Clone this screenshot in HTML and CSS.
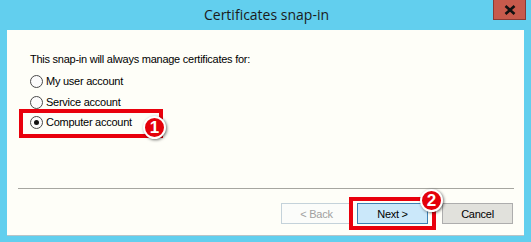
FILE: index.html
```html
<!DOCTYPE html>
<html>
<head>
<meta charset="utf-8">
<link rel="stylesheet" href="styles.css">
</head>
<body>
<div class="window">
  <div class="titlebar">
    <div class="title">Certificates snap-in</div>
    <div class="close"><svg width="12" height="10" viewBox="0 0 12 10"><path d="M1.5 1 L10.5 9 M10.5 1 L1.5 9" stroke="#111" stroke-width="2.6"/></svg></div>
  </div>
  <div class="content">
    <div class="main">
      <div class="intro">This snap-in will always manage certificates for:</div>
      <div class="options">
        <div class="option"><span class="radio"></span><span>My user account</span></div>
        <div class="option"><span class="radio"></span><span>Service account</span></div>
        <div class="option"><span class="radio checked"></span><span>Computer account</span></div>
      </div>
    </div>
    <div class="separator"></div>
    <div class="buttons">
      <div class="btn disabled">&lt; Back</div>
      <div class="btn primary">Next &gt;</div>
      <div class="btn cancel">Cancel</div>
    </div>
    <div class="highlight h1"></div>
    <div class="badge b1">1</div>
    <div class="highlight h2"></div>
    <div class="badge b2">2</div>
  </div>
</div>
</body>
</html>
```
FILE: styles.css
```css
html, body {
  margin: 0;
  padding: 0;
}
body {
  width: 531px;
  height: 242px;
  overflow: hidden;
}
.window {
  width: 531px;
  height: 242px;
  background: #62cfee;
  display: flex;
  flex-direction: column;
}
.titlebar {
  height: 30px;
  position: relative;
  display: flex;
  justify-content: center;
  align-items: center;
}
.title {
  font-family: "Open Sans", "Noto Sans", sans-serif;
  font-size: 14px;
  color: #1b1b1b;
  margin-top: -1px;
  margin-left: 2px;
}
.close {
  position: absolute;
  left: 493px;
  top: 0;
  width: 31px;
  height: 19px;
  background: #c75a4c;
  border: 1px solid #8a3a33;
  border-top: none;
  display: flex;
  align-items: center;
  justify-content: center;
}
.content {
  position: relative;
  margin: 0 7px 0 7px;
  height: 205px;
  background: #fefef8;
  border-bottom: 1px solid #b8c4c8;
  display: flex;
  flex-direction: column;
  font-family: "Liberation Sans", Arial, sans-serif;
  font-size: 11px;
  letter-spacing: -0.25px;
  color: #000;
}
.main {
  padding: 23px 0 0 23px;
  height: 135px;
  box-sizing: border-box;
}
.intro {
  line-height: 13px;
}
.options {
  margin-top: 9px;
  display: flex;
  flex-direction: column;
  gap: 7.5px;
}
.option {
  display: flex;
  align-items: center;
  gap: 3px;
  height: 13px;
  line-height: 13px;
}
.radio {
  width: 11px;
  height: 11px;
  border: 1px solid #4a4a4a;
  border-radius: 50%;
  background: #fbfbfb;
  position: relative;
  box-sizing: content-box;
}
.radio.checked::after {
  content: "";
  position: absolute;
  left: 3px;
  top: 3px;
  width: 5px;
  height: 5px;
  border-radius: 50%;
  background: #111;
}
.separator {
  margin: 23px 10px 0 11px;
  height: 1px;
  background: #a6a6a0;
}
.buttons {
  margin-top: 14px;
  display: flex;
  padding-left: 274px;
}
.btn {
  width: 71px;
  height: 21px;
  box-sizing: border-box;
  display: flex;
  align-items: center;
  justify-content: center;
  border: 1px solid #adadad;
}
.btn.disabled {
  color: #a0a0a0;
  background: #fbfcfa;
  border-color: #c4d2da;
}
.btn.primary {
  margin-left: 5px;
  background: #cbe8fa;
  border-color: #3c80b4;
}
.btn.cancel {
  margin-left: 14px;
  background: #e1e1dc;
  border-color: #adadad;
}
.highlight {
  position: absolute;
  border: 4px solid #e9000c;
  box-sizing: border-box;
}
.h1 {
  left: 12px;
  top: 79px;
  width: 144px;
  height: 29px;
}
.h2 {
  left: 342px;
  top: 167px;
  width: 87px;
  height: 33px;
}
.badge {
  position: absolute;
  width: 19px;
  height: 19px;
  border-radius: 50%;
  background: #e4000a;
  border: 2px solid #ffffff;
  box-shadow: 1px 1px 3px rgba(0,0,0,0.55);
  color: #fff;
  font-family: "Liberation Sans", Arial, sans-serif;
  font-weight: bold;
  font-size: 17px;
  letter-spacing: 0;
  display: flex;
  align-items: center;
  justify-content: center;
  line-height: 1;
}
.b1 {
  left: 136px;
  top: 86px;
}
.b2 {
  left: 413px;
  top: 159px;
}
```
